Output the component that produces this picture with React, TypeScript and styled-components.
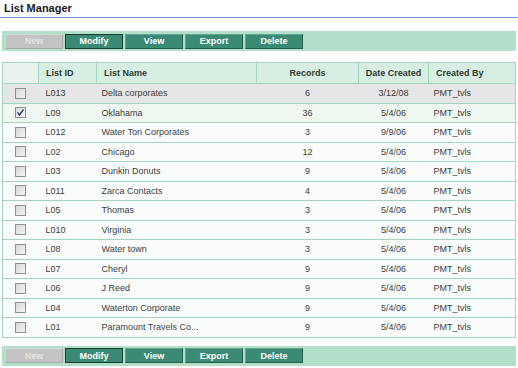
import { createGlobalStyle, styled } from "styled-components";

type Row = {
  id: string;
  name: string;
  records: number;
  date: string;
  by: string;
  checked?: boolean;
  tone?: "hover" | "selected";
};

const rows: Row[] = [
  { id: "L013", name: "Delta corporates", records: 6, date: "3/12/08", by: "PMT_tvls", tone: "hover" },
  { id: "L09", name: "Oklahama", records: 36, date: "5/4/06", by: "PMT_tvls", checked: true, tone: "selected" },
  { id: "L012", name: "Water Ton Corporates", records: 3, date: "9/9/06", by: "PMT_tvls" },
  { id: "L02", name: "Chicago", records: 12, date: "5/4/06", by: "PMT_tvls" },
  { id: "L03", name: "Dunkin Donuts", records: 9, date: "5/4/06", by: "PMT_tvls" },
  { id: "L011", name: "Zarca Contacts", records: 4, date: "5/4/06", by: "PMT_tvls" },
  { id: "L05", name: "Thomas", records: 3, date: "5/4/06", by: "PMT_tvls" },
  { id: "L010", name: "Virginia", records: 3, date: "5/4/06", by: "PMT_tvls" },
  { id: "L08", name: "Water town", records: 3, date: "5/4/06", by: "PMT_tvls" },
  { id: "L07", name: "Cheryl", records: 9, date: "5/4/06", by: "PMT_tvls" },
  { id: "L06", name: "J Reed", records: 9, date: "5/4/06", by: "PMT_tvls" },
  { id: "L04", name: "Waterton Corporate", records: 9, date: "5/4/06", by: "PMT_tvls" },
  { id: "L01", name: "Paramount Travels Co...", records: 9, date: "5/4/06", by: "PMT_tvls" },
];

function ActionBar() {
  return (
    <StyledBar>
      <StyledButton disabled>New</StyledButton>
      <StyledButton $focused>Modify</StyledButton>
      <StyledButton>View</StyledButton>
      <StyledButton>Export</StyledButton>
      <StyledButton>Delete</StyledButton>
    </StyledBar>
  );
}

function Check({ checked }: { checked?: boolean }) {
  return (
    <StyledCheck>
      {checked && (
        <svg width="9" height="9" viewBox="0 0 9 9">
          <path d="M1.5 4.5 L3.5 7 L7.5 1.5" fill="none" stroke="#2a3f8f" strokeWidth="1.4" />
        </svg>
      )}
    </StyledCheck>
  );
}

export default function App() {
  return (
    <>
      <GlobalStyle />
      <StyledPage>
        <StyledTitle>List Manager</StyledTitle>
        <ActionBar />
        <StyledTable>
          <colgroup>
            <col style={{ width: 36 }} />
            <col style={{ width: 58 }} />
            <col style={{ width: 160 }} />
            <col style={{ width: 102 }} />
            <col style={{ width: 70 }} />
            <col />
          </colgroup>
          <thead>
            <tr>
              <StyledHead $blank />
              <StyledHead>List ID</StyledHead>
              <StyledHead>List Name</StyledHead>
              <StyledHead $align="center">Records</StyledHead>
              <StyledHead $align="center">Date Created</StyledHead>
              <StyledHead>Created By</StyledHead>
            </tr>
          </thead>
          <tbody>
            {rows.map((r) => (
              <StyledRow key={r.id} $tone={r.tone}>
                <StyledCell $align="center">
                  <Check checked={r.checked} />
                </StyledCell>
                <StyledCell $pad={7}>{r.id}</StyledCell>
                <StyledCell>{r.name}</StyledCell>
                <StyledCell $align="center">{r.records}</StyledCell>
                <StyledCell $align="center">{r.date}</StyledCell>
                <StyledCell>{r.by}</StyledCell>
              </StyledRow>
            ))}
          </tbody>
        </StyledTable>
        <ActionBar />
      </StyledPage>
    </>
  );
}

// Styled components
const GlobalStyle = createGlobalStyle`
  body {
    margin: 0;
    background: #ffffff;
    font-family: "Liberation Sans", Arial, sans-serif;
    color: #333333;
  }
`;

const StyledPage = styled("div")`
  width: 518px;
  padding-top: 2px;
`;

const StyledTitle = styled("div")`
  font-size: 11px;
  font-weight: 700;
  color: #1a1a1a;
  padding: 0 4px 3px;
  border-bottom: 1px solid #6f97dd;
  margin-bottom: 13px;
`;

const StyledBar = styled("div")`
  display: flex;
  gap: 2px;
  margin: 0 2px;
  padding: 0 3px;
  height: 20px;
  background: #b2dfca;
  align-items: center;
  & + table {
    margin-top: 11px;
  }
`;

const StyledButton = styled("button")<{ $focused?: boolean }>`
  width: 58px;
  height: 15px;
  padding: 0;
  font-family: "Liberation Sans", Arial, sans-serif;
  font-size: 9px;
  font-weight: 700;
  color: #ffffff;
  background: #3b8a73;
  border: 1px solid ${(p) => (p.$focused ? "#1b3d33" : "#5fa58f")};
  border-right-color: ${(p) => (p.$focused ? "#1b3d33" : "#23594a")};
  border-bottom-color: ${(p) => (p.$focused ? "#1b3d33" : "#23594a")};
  cursor: pointer;
  &:disabled {
    background: #c3c3c3;
    color: #e4e4e4;
    border-color: #d8d8d8 #a8a8a8 #a8a8a8 #d8d8d8;
    cursor: default;
  }
`;

const StyledTable = styled("table")`
  width: 514px;
  margin: 0 2px 8px;
  border-collapse: collapse;
  table-layout: fixed;
  font-size: 9px;
  border: 1px solid #a3d6bf;
`;

const StyledHead = styled("th")<{ $align?: string; $blank?: boolean }>`
  height: 20px;
  padding: 0 5px 0 ${(p) => (p.$align ? "5px" : "7px")};
  text-align: ${(p) => p.$align || "left"};
  font-weight: 700;
  color: #2f3a35;
  background: ${(p) => (p.$blank ? "#eaf2ee" : "#d6efe2")};
  border: 1px solid #a3d6bf;
`;

const StyledRow = styled("tr")<{ $tone?: "hover" | "selected" }>`
  background: ${(p) =>
    p.$tone === "hover" ? "#e6e6e6" : p.$tone === "selected" ? "#eef8f1" : "#fbfdfc"};
`;

const StyledCell = styled("td")<{ $align?: string; $pad?: number }>`
  height: 18.5px;
  padding: 0 5px 0 ${(p) => (p.$pad ?? 5)}px;
  text-align: ${(p) => p.$align || "left"};
  color: #3c3c3c;
  border-top: 1px solid #a3d6bf;
  border-bottom: 1px solid #a3d6bf;
  white-space: nowrap;
  overflow: hidden;
`;

const StyledCheck = styled("span")`
  display: inline-flex;
  align-items: center;
  justify-content: center;
  width: 9px;
  height: 9px;
  vertical-align: middle;
  border: 1px solid #8f8f8f;
  background: linear-gradient(135deg, #d8d8d8, #f4f4f4);
`;
